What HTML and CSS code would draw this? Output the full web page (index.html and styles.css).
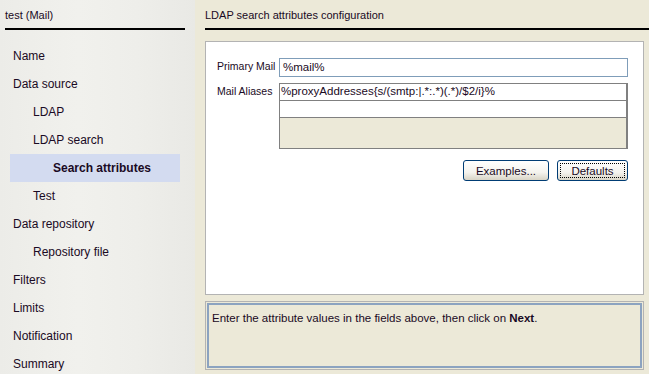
FILE: index.html
```html
<!DOCTYPE html>
<html lang="en">

<head>
    <meta charset="UTF-8">
    <title>LDAP search attributes configuration</title>
    <link rel="stylesheet" href="styles.css">
</head>

<body>
    <div class="wizard">
        <div class="sidebar">
            <div class="side-title">test (Mail)</div>
            <ul class="steps">
                <li class="lvl0">Name</li>
                <li class="lvl0">Data source</li>
                <li class="lvl1">LDAP</li>
                <li class="lvl1">LDAP search</li>
                <li class="lvl2 current">Search attributes</li>
                <li class="lvl1">Test</li>
                <li class="lvl0">Data repository</li>
                <li class="lvl1">Repository file</li>
                <li class="lvl0">Filters</li>
                <li class="lvl0">Limits</li>
                <li class="lvl0">Notification</li>
                <li class="lvl0">Summary</li>
            </ul>
        </div>
        <div class="main">
            <div class="main-title">LDAP search attributes configuration</div>
            <div class="panel">
                <div class="field">
                    <label>Primary Mail</label>
                    <div class="input">%mail%</div>
                </div>
                <div class="field">
                    <label>Mail Aliases</label>
                    <div class="list">
                        <div class="list-row">%proxyAddresses{s/(smtp:|.*:.*)(.*)/$2/i}%</div>
                        <div class="list-row"></div>
                    </div>
                </div>
                <div class="buttons">
                    <button class="btn">Examples...</button>
                    <button class="btn focused"><span>Defaults</span></button>
                </div>
            </div>
            <div class="help">
                <div class="help-inner">Enter the attribute values in the fields above, then click on <b>Next</b>.</div>
            </div>
        </div>
    </div>
</body>

</html>
```

FILE: styles.css
```css
body {
    margin: 0;
    font-family: "Liberation Sans", Arial, sans-serif;
    color: #1a0a24;
}

.wizard {
    display: flex;
    width: 649px;
    height: 374px;
    overflow: hidden;
}

/* left step list */
.sidebar {
    width: 195px;
    flex-shrink: 0;
    background: linear-gradient(90deg, #ececE8 0%, #f1f1ed 40%, #eeeeea 70%, #e9e9e5 100%);
}

.side-title {
    margin: 0 10px 0 5px;
    height: 28px;
    line-height: 30px;
    font-size: 11px;
    border-bottom: 2px solid #000;
}

.steps {
    list-style: none;
    margin: 12px 0 0 0;
    padding: 0;
}

.steps li {
    height: 28px;
    line-height: 28px;
    font-size: 12px;
}

.lvl0 {
    padding-left: 13px;
}

.lvl1 {
    padding-left: 33px;
}

.lvl2 {
    padding-left: 53px;
}

.steps .current {
    margin: 0 15px 0 10px;
    padding-left: 43px;
    background-color: #d3dbf0;
    font-weight: bold;
}

/* right content */
.main {
    flex: 1;
    background-color: #ece9d8;
    padding-left: 10px;
    font-size: 11px;
}

.main-title {
    height: 28px;
    line-height: 30px;
    border-bottom: 2px solid #000;
}

.panel {
    margin-top: 11px;
    width: 439px;
    height: 254px;
    background-color: #fff;
    border: 1px solid #b3b3b3;
    padding: 16px 0 0 11px;
    box-sizing: border-box;
}

.field {
    display: flex;
    margin-bottom: 6px;
}

.field label {
    width: 62px;
    flex-shrink: 0;
    padding-top: 2px;
    font-size: 10.5px;
    white-space: nowrap;
}

.input {
    width: 349px;
    height: 19px;
    box-sizing: border-box;
    border: 1px solid #7f9db9;
    padding: 2px 0 0 3px;
    font-size: 11.5px;
}

.list {
    width: 349px;
    height: 66px;
    box-sizing: border-box;
    border: 1px solid #808080;
    border-right-width: 2px;
    background-color: #ece9d8;
}

.list-row {
    height: 16px;
    line-height: 15px;
    background-color: #fff;
    border-bottom: 1px solid #808080;
    padding-left: 1px;
    font-size: 11.5px;
}

.buttons {
    display: flex;
    justify-content: flex-end;
    gap: 8px;
    margin-top: 11px;
    padding-right: 15px;
}

.btn {
    height: 21px;
    padding: 0;
    font-family: "Liberation Sans", Arial, sans-serif;
    font-size: 11.5px;
    color: #1a0a24;
    border: 1px solid #003c74;
    border-radius: 3px;
    background: linear-gradient(#ffffff, #f4f3ee 60%, #d8d4c6);
    width: 86px;
}

.btn.focused {
    width: 71px;
    padding: 2px;
}

.btn.focused span {
    display: block;
    height: 100%;
    line-height: 15px;
    border: 1px dotted #000;
    box-sizing: border-box;
}

/* help text box */
.help {
    margin-top: 6px;
    width: 439px;
    height: 69px;
    box-sizing: border-box;
    border: 1px solid #b3b3b3;
    padding: 1px;
}

.help-inner {
    height: 100%;
    box-sizing: border-box;
    border: 2px solid #8ca3c0;
    padding: 7px 0 0 3px;
    font-size: 11.5px;
}
```
